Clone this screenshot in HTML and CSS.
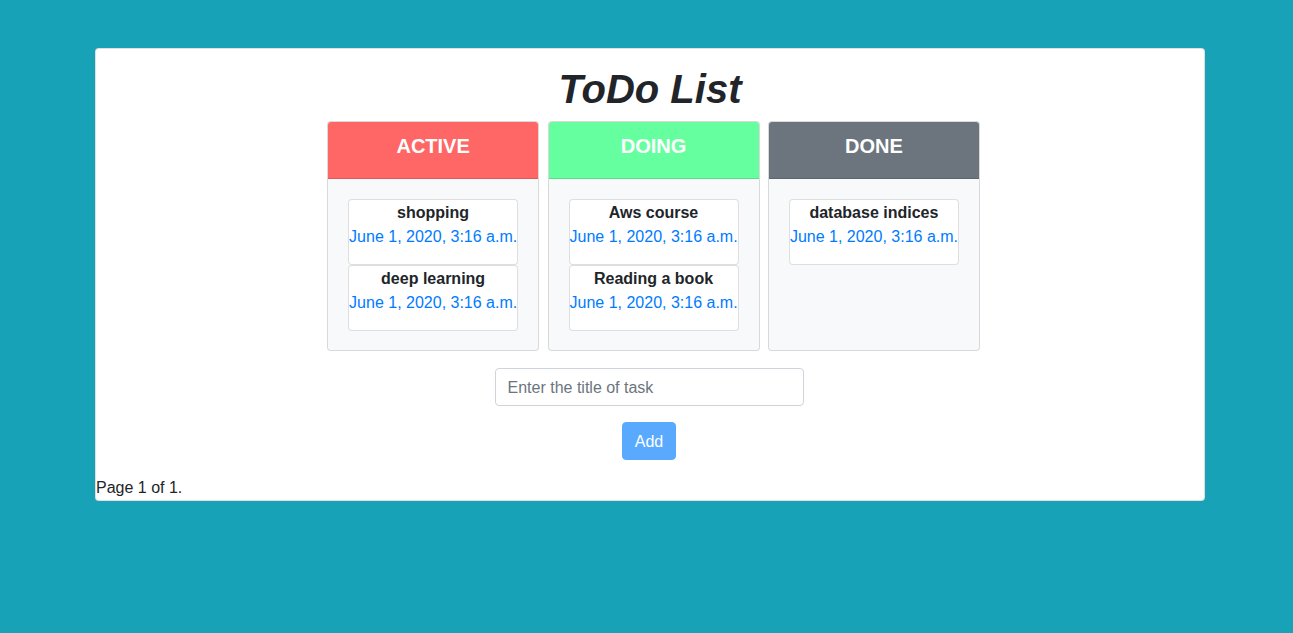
FILE: index.html
```html
<!DOCTYPE html>
<html lang="en">
<head>
<meta charset="utf-8">
<title>ToDo List</title>
<link rel="stylesheet" href="styles.css">
</head>
<body>
<div class="page">
  <main class="panel">
    <h1 class="title">ToDo List</h1>
    <div class="board">
      <section class="column">
        <header class="col-head head-active"><h5>ACTIVE</h5></header>
        <div class="col-body">
          <div class="task"><div class="task-title">shopping</div><p class="task-date">June 1, 2020, 3:16 a.m.</p></div>
          <div class="task"><div class="task-title">deep learning</div><p class="task-date">June 1, 2020, 3:16 a.m.</p></div>
        </div>
      </section>
      <section class="column">
        <header class="col-head head-doing"><h5>DOING</h5></header>
        <div class="col-body">
          <div class="task"><div class="task-title">Aws course</div><p class="task-date">June 1, 2020, 3:16 a.m.</p></div>
          <div class="task"><div class="task-title">Reading a book</div><p class="task-date">June 1, 2020, 3:16 a.m.</p></div>
        </div>
      </section>
      <section class="column">
        <header class="col-head head-done"><h5>DONE</h5></header>
        <div class="col-body">
          <div class="task"><div class="task-title">database indices</div><p class="task-date">June 1, 2020, 3:16 a.m.</p></div>
        </div>
      </section>
    </div>
    <form class="add-form">
      <input class="task-input" type="text" placeholder="Enter the title of task">
      <button class="add-btn" type="button" disabled>Add</button>
    </form>
    <div class="pager">Page 1 of 1.</div>
  </main>
</div>
</body>
</html>
```

FILE: styles.css
```css
* { box-sizing: border-box; }
html, body { margin: 0; padding: 0; }
body {
  background: #17a2b8;
  font-family: "Liberation Sans", Arial, sans-serif;
  font-size: 16px;
  line-height: 1.5;
  color: #212529;
}
.page {
  width: 1110px;
  margin: 48px 0 0 95px;
}
.panel {
  background: #fff;
  border: 1px solid rgba(0,0,0,.125);
  border-radius: 4px;
  display: flex;
  flex-direction: column;
}
.title {
  margin: 16px 0 8px;
  text-align: center;
  font-size: 40px;
  line-height: 48px;
  font-weight: 700;
  font-style: italic;
  color: #212529;
}
.board {
  display: flex;
  justify-content: center;
  gap: 8.4px;
  padding-left: 7px;
}
.column {
  width: 212px;
  height: 230px;
  border: 1px solid rgba(0,0,0,.125);
  border-radius: 4px;
  background: #f8f9fa;
  overflow: hidden;
  display: flex;
  flex-direction: column;
}
.col-head {
  padding: 12px 0;
  border-bottom: 1px solid rgba(0,0,0,.125);
  text-align: center;
  color: #fff;
}
.col-head h5 {
  margin: 0 0 8px;
  font-size: 20px;
  line-height: 24px;
  font-weight: 700;
}
.head-active { background: #ff6666; }
.head-doing { background: #66ff9f; }
.head-done { background: #6c757d; }
.col-body {
  padding: 20px 20px 19px;
  display: flex;
  flex-direction: column;
}
.task {
  width: 170px;
  background: #fff;
  border: 1px solid rgba(0,0,0,.125);
  border-radius: 4px;
  text-align: center;
  white-space: nowrap;
}
.task-title {
  padding-top: 1px;
  font-weight: 700;
  line-height: 24px;
}
.task-date {
  margin: 0 0 15px;
  color: #007bff;
  line-height: 24px;
}
.add-form {
  display: flex;
  flex-direction: column;
  align-items: center;
  padding-right: 2px;
}
.task-input {
  margin-top: 17px;
  width: 309px;
  height: 38px;
  padding: 7px 12px 5px;
  border: 1px solid #ced4da;
  border-radius: 4px;
  font-family: inherit;
  font-size: 16px;
  color: #495057;
}
.task-input::placeholder { color: #6c757d; opacity: 1; }
.add-btn {
  margin-top: 16px;
  height: 38px;
  padding: 7px 12px 5px;
  border: 1px solid #59a9ff;
  border-radius: 4px;
  background: #59a9ff;
  color: #fff;
  font-family: inherit;
  font-size: 16px;
  line-height: 24px;
}
.pager {
  margin-top: 15px;
  padding-top: 1px;
  line-height: 24px;
}
```
